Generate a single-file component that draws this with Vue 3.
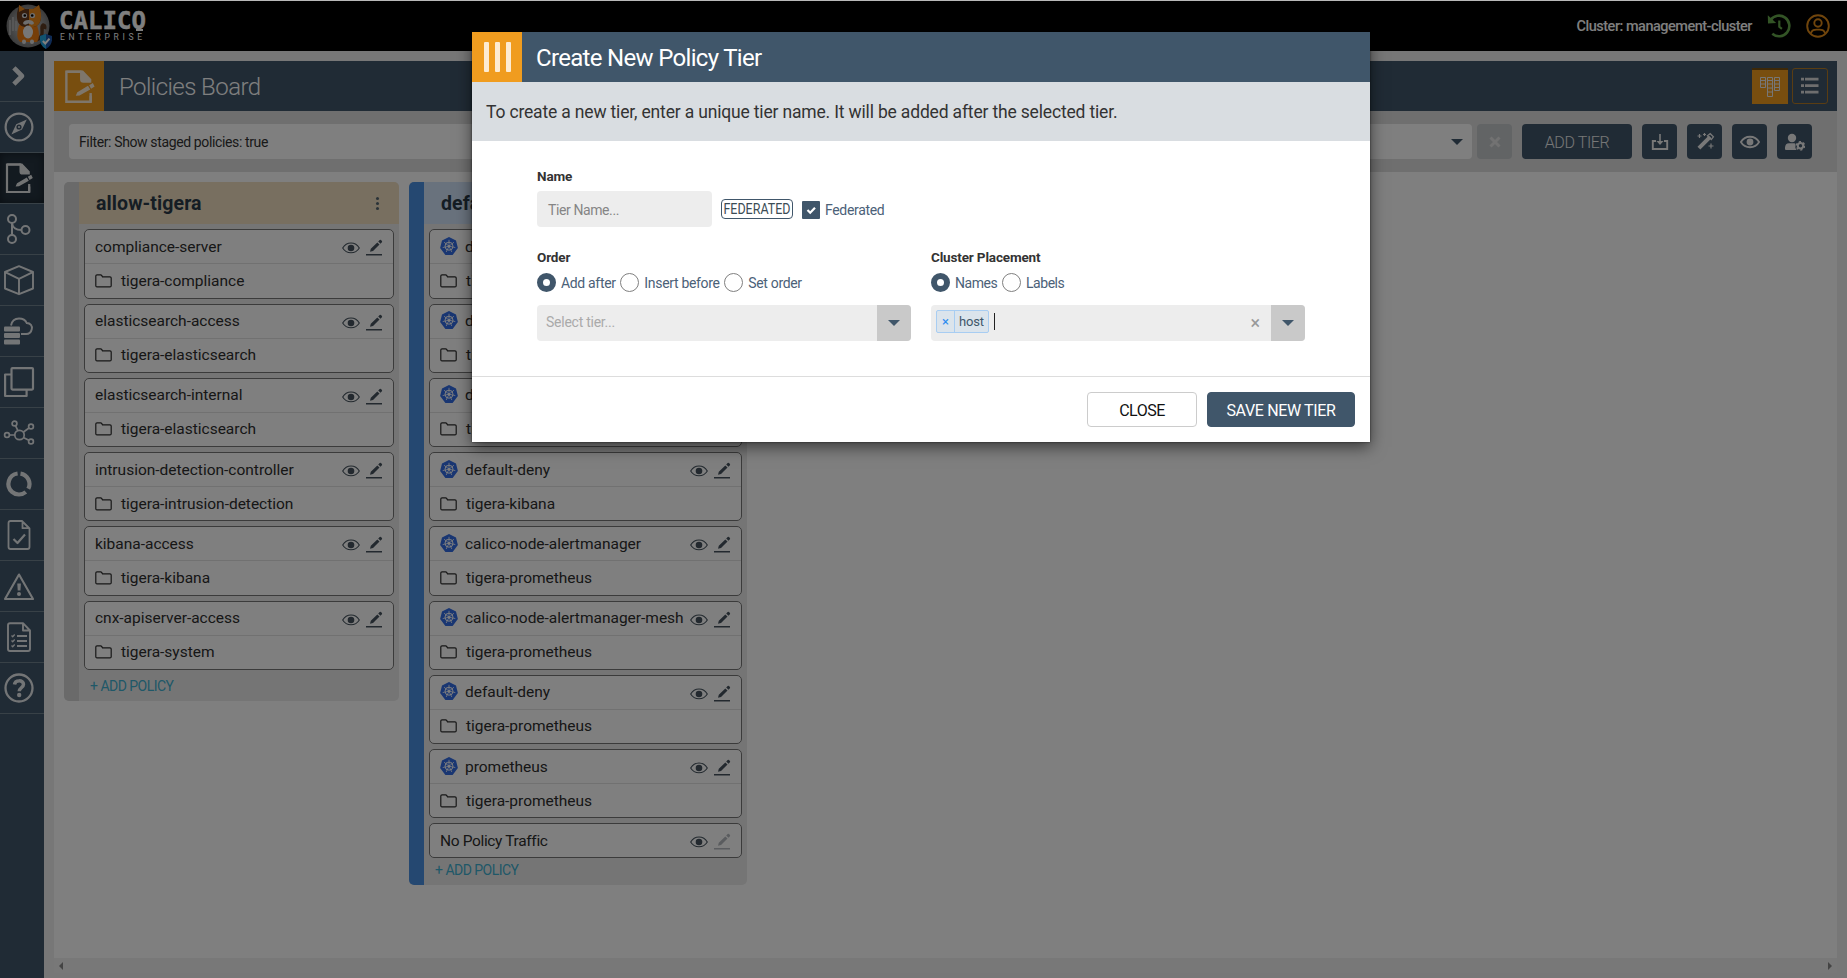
<script setup>
const navIcons = ['chevron', 'compass', 'policy', 'graph', 'cube', 'cloud', 'copies', 'nodes', 'ring', 'doccheck', 'alert', 'doclist', 'help']

const tiers = [
  {
    name: 'allow-tigera',
    kind: 'sand',
    menu: true,
    policies: [
      { name: 'compliance-server', ns: 'tigera-compliance' },
      { name: 'elasticsearch-access', ns: 'tigera-elasticsearch' },
      { name: 'elasticsearch-internal', ns: 'tigera-elasticsearch' },
      { name: 'intrusion-detection-controller', ns: 'tigera-intrusion-detection' },
      { name: 'kibana-access', ns: 'tigera-kibana' },
      { name: 'cnx-apiserver-access', ns: 'tigera-system' },
    ],
  },
  {
    name: 'default',
    kind: 'blue',
    k8s: true,
    policies: [
      { name: 'default-deny', ns: 'tigera-compliance' },
      { name: 'default-deny', ns: 'tigera-dex' },
      { name: 'default-deny', ns: 'tigera-elasticsearch' },
      { name: 'default-deny', ns: 'tigera-kibana' },
      { name: 'calico-node-alertmanager', ns: 'tigera-prometheus' },
      { name: 'calico-node-alertmanager-mesh', ns: 'tigera-prometheus' },
      { name: 'default-deny', ns: 'tigera-prometheus' },
      { name: 'prometheus', ns: 'tigera-prometheus' },
    ],
    footer: 'No Policy Traffic',
  },
]

const tools = ['import', 'wand', 'view', 'usercog']
const orders = ['Add after', 'Insert before', 'Set order']
const placements = ['Names', 'Labels']
</script>

<template>
  <div class="page">
    <svg class="defs" aria-hidden="true">
      <symbol id="chevron" viewBox="0 0 32 32"><path d="M12.500 9.500l6.500 6.500-6.500 6.500" fill="none" stroke="currentColor" stroke-width="4.600" stroke-linecap="square" stroke-linejoin="round" /></symbol>
      <symbol id="compass" viewBox="0 0 32 32">
        <circle cx="16" cy="16" r="13.4" fill="none" stroke="currentColor" stroke-width="2.2" />
        <path fill="currentColor" fill-rule="evenodd" d="M23.8 8.6 19 18.6 8.4 23.6l4.8-10.4zM16 13.4a2.6 2.6 0 1 0 0 5.2 2.6 2.6 0 0 0 0-5.2z" />
        <circle cx="16" cy="16" r="1" fill="currentColor" />
      </symbol>
      <symbol id="policy" viewBox="0 0 32 32">
        <path d="M26.2 24.5V30H4V2.500h13" fill="none" stroke="currentColor" stroke-width="2.2" />
        <path d="M4 2.500h14" stroke="currentColor" stroke-width="2.200" />
        <path d="M16.500 1.400h2.700l7.600 8v3.200h-7.200q-3.100 0-3.100-3.200z" fill="currentColor" />
        <path d="M14 21.200 23.800 15.400 25.800 18.800 16 24.200 12.600 24.400zM24.800 14.800l3.400-2 1.600 3.300-3.200 1.900z" fill="currentColor" />
        <path d="M26.200 22v8" stroke="currentColor" stroke-width="2.200" />
      </symbol>
      <symbol id="graph" viewBox="0 0 32 32">
        <g fill="none" stroke="currentColor" stroke-width="2"><circle cx="9" cy="6" r="4" /><circle cx="9" cy="26" r="4" /><circle cx="22.500" cy="17" r="4" /><path d="M9 10v12M9 10c.5 4.500 4 7 9.500 7" /></g>
      </symbol>
      <symbol id="cube" viewBox="0 0 32 32"><path d="M16 2.200 30 8v16.500L16 30.200 2 24.500V8zM2.200 8.200 16 14.800 29.800 8.200M16 14.800V30" fill="none" stroke="currentColor" stroke-width="1.900" stroke-linejoin="round" /></symbol>
      <symbol id="cloud" viewBox="0 0 32 32">
        <path d="M8 10.500C9 5.500 12 3.500 16 3.500c3.600 0 6.500 1.600 7.700 4.500C27.500 8 29.500 11 28.800 14c-.5 3-2.600 5-5.800 5h-5" fill="none" stroke="currentColor" stroke-width="1.900" />
        <g fill="currentColor"><rect x="1" y="11.500" width="16" height="5" rx="1" /><rect x="1" y="18" width="16" height="5" rx="1" /><rect x="1" y="24.500" width="16" height="5" rx="1" /></g>
      </symbol>
      <symbol id="copies" viewBox="0 0 32 32"><g fill="none" stroke="currentColor" stroke-width="2.200"><rect x="8.500" y="2.100" width="21.500" height="21.500" rx="1" /><path d="M8 8.500H2.100V30h21.500v-6" stroke-linejoin="round" /></g></symbol>
      <symbol id="nodes" viewBox="0 0 32 32">
        <g fill="none" stroke="currentColor" stroke-width="1.700" transform="translate(0 1.500)"><circle cx="16.500" cy="16.500" r="4.700" /><circle cx="11.500" cy="5" r="2.400" /><circle cx="28" cy="8" r="2.400" /><circle cx="4" cy="16.500" r="2.400" /><circle cx="28" cy="23" r="2.400" /><path d="M12.600 7.300l2.400 5M20.500 13.500l5.500-4M6.500 16.500h5.500M20.800 19.200l5 2.600" /></g>
      </symbol>
      <symbol id="ring" viewBox="0 0 32 32">
        <g fill="none" stroke="currentColor" stroke-width="4.200"><path d="M14.600 5.500A10.500 10.500 0 0 0 9 23.800 10.500 10.500 0 0 0 22.800 24" /><path d="M17.500 5.600A10.500 10.500 0 0 1 25.300 20.800" /></g>
      </symbol>
      <symbol id="doccheck" viewBox="0 0 32 32"><g fill="none" stroke="currentColor" stroke-width="1.800" stroke-linejoin="round"><path d="M7.500 2H19l7.500 7.500V28q0 2-2 2h-17q-2 0-2-2V4q0-2 2-2zM19.500 2v7.200h7" /><path d="M10.500 20l4 4 7.500-8.500" stroke-width="2.200" /></g></symbol>
      <symbol id="alert" viewBox="0 0 32 32"><path d="M16 4.500 30 29H2z" fill="none" stroke="currentColor" stroke-width="2.100" stroke-linejoin="round" /><path d="M14.300 13.500h3.600l-.4 7h-2.800z" fill="currentColor" /><circle cx="16" cy="24" r="2" fill="currentColor" /></symbol>
      <symbol id="doclist" viewBox="0 0 32 32"><g fill="none" stroke="currentColor" stroke-width="1.900" stroke-linejoin="round"><path d="M7 2.200h13l7 7.300V28q0 2-2 2H7q-2 0-2-2V4.200q0-2 2-2zM20 2.500v7h7" /><path d="M14 15h10M14 20h10M14 25h10" stroke-width="2" /><path d="M8.500 14.500l1.200 1.200 2-2.200M8.500 19.500l1.200 1.200 2-2.200M8.500 24.500l1.200 1.200 2-2.200" stroke-width="1.300" /></g></symbol>
      <symbol id="help" viewBox="0 0 32 32"><g fill="none" stroke="currentColor"><circle cx="16" cy="16" r="13.500" stroke-width="2.300" /><path d="M11.500 12.500c.5-4.800 9-4.800 9-.2 0 3.500-4.300 3.400-4.300 7" stroke-width="3.500" /></g><circle cx="16.200" cy="23" r="2.200" fill="currentColor" /></symbol>
      <symbol id="eye" viewBox="0 0 18 12"><path d="M.7 6C4.500-.6 13.500-.6 17.300 6 13.500 12.400 4.500 12.400.7 6z" fill="none" stroke="currentColor" stroke-width="1.100" /><circle cx="9" cy="6" r="3.300" fill="currentColor" /></symbol>
      <symbol id="edit" viewBox="0 0 17 17"><path d="M0 15h16v1.500H0zM4 12.800l.8-3L11.300 3.400l2.200 2.200L7 12zM12.200 2.500l1.500-1.400q.7-.5 1.300 0l.9.900q.5.700 0 1.300l-1.400 1.500z" fill="currentColor" /></symbol>
      <symbol id="folder" viewBox="0 0 17 14"><path d="M.8 2q0-1.200 1.200-1.200h3.600q.7 0 1.200.8l.7 1.200h7.500q1.200 0 1.200 1.200v7.700q0 1.200-1.200 1.200H2q-1.200 0-1.200-1.200z" fill="none" stroke="currentColor" stroke-width="1.200" /></symbol>
      <symbol id="helm" viewBox="0 0 18 18">
        <path d="M9 0l7 3.400L17.900 11 13 17.500q-.4.500-1 .5H6q-.6 0-1-.5L.1 11 2 3.400z" fill="#326ce5" />
        <g fill="none" stroke="#fff"><circle cx="9" cy="9.200" r="4" stroke-width="1" /><path d="M9 2.800v5M9 9.200l5-4M9 9.200l6.300 1.400M9 9.200l2.800 5.800M9 9.200L6.200 15M9 9.200l-6.300 1.400M9 9.200L4 5.200" stroke-width=".8" /></g>
        <circle cx="9" cy="9.200" r="1.200" fill="#fff" />
      </symbol>
      <symbol id="import" viewBox="0 0 20 20"><path d="M6 9H2.800v8h14.400V9H14" fill="none" stroke="currentColor" stroke-width="1.900" /><path d="M9.200 2h1.600v7h2.700L10 13 6.500 9h2.700z" fill="currentColor" /></symbol>
      <symbol id="wand" viewBox="0 0 20 20"><path d="M2.500 14.800 13.800 3.500l2.800 2.800L5.300 17.600z" fill="currentColor" /><path d="M12.500 3.800 15.200 1.700 18.400 4.900 16.300 7.600z" fill="none" stroke="currentColor" stroke-width="1.300" /><path d="M4.500 2v4M2.500 4h4M9.500 1v3M8 2.500h3M16 11.500v5M13.500 14h5" stroke="currentColor" stroke-width="1.200" /></symbol>
      <symbol id="view" viewBox="0 0 20 20"><path d="M.9 10C5 3 15 3 19.100 10 15 17 5 17 .9 10z" fill="none" stroke="currentColor" stroke-width="1.800" /><circle cx="10" cy="10" r="3.400" fill="currentColor" /></symbol>
      <symbol id="usercog" viewBox="0 0 20 20"><circle cx="7" cy="6" r="4.200" fill="currentColor" /><path d="M0 17v-1.500Q.3 11.300 4 11.200h5.500q1.300.2 1 1.800-.8 2.500 1.200 5H1q-1 0-1-1z" fill="currentColor" /><circle cx="15.500" cy="13.800" r="2.700" fill="none" stroke="currentColor" stroke-width="2" /><circle cx="15.500" cy="13.800" r="4.100" fill="none" stroke="currentColor" stroke-width="1.500" stroke-dasharray="2.150 2.150" /></symbol>
    </svg>

    <header class="topbar">
      <svg class="mascot" viewBox="0 0 46 46">
        <defs><radialGradient id="disc"><stop offset="0" stop-color="#d4d4d4" /><stop offset="1" stop-color="#777" /></radialGradient></defs>
        <circle cx="22" cy="23" r="21.500" fill="url(#disc)" />
        <path d="M4 17v15M7 14v14M10 18v10" stroke="#b8b8b8" stroke-width="1.500" />
        <path d="M30 37c8-2 6-9 6-12-.2-4 4-4 2.500 1" fill="none" stroke="#5d3b22" stroke-width="3.500" />
        <path d="M13 22q-4 13 1 17h17q4-5 0-17z" fill="#ed7d13" />
        <path d="M13 2l6 4h8l6-4 2 8q1 13-8 14h-8q-9-1-8-14z" fill="#6a3d1d" />
        <path d="M23 6h4l6-4 2 8q1 13-8 14h-4z" fill="#ed8a1d" /><path d="M13 2l6 4-6 3z" fill="#ed8a1d" />
        <circle cx="18.500" cy="12.500" r="2.600" fill="#ddd" /><circle cx="26.500" cy="12.500" r="2.600" fill="#ddd" />
        <circle cx="18.800" cy="12.500" r="1.300" /><circle cx="26.200" cy="12.500" r="1.300" />
        <path d="M17 20q1-3 5.500-3T28 20q0 1.700-2.500 1.700l-3-1.200-3 1.200q-2.500 0-2.500-1.700z" fill="#ddd" />
        <ellipse cx="22" cy="29" rx="5" ry="6.500" fill="#eee" />
        <path d="M18 38.500v.5M26 38.500v.5" stroke="#ddd" stroke-width="4" stroke-linecap="round" />
        <path d="M40 31l6 2q1 9-6 13-7-4-6-13z" fill="#1d55a8" /><path d="M40 31v15q-7-4-6-13z" fill="#23a7e0" /><path d="M36.800 38l2.500 2.500 4.200-4.800" fill="none" stroke="#fff" stroke-width="2" />
      </svg>
      <svg class="wordmark" viewBox="0 0 90 34">
        <text x="0" y="21" textLength="87" lengthAdjust="spacingAndGlyphs" class="wm-main">CALICO</text>
        <rect x="77" y="21" width="7" height="2" fill="#fff" />
        <text x="1" y="31.500" textLength="82" class="wm-sub">ENTERPRISE</text>
      </svg>
      <span class="cluster">Cluster: management-cluster</span>
      <svg class="history" viewBox="0 0 24 24"><path d="M3.500 6.200A10.300 10.300 0 1 1 5.300 19.700" fill="none" stroke="currentColor" stroke-width="2.600" /><path d="M.8 1.200l.2 8.300 8.200-.6z" fill="currentColor" /><path d="M12.300 6.500v6.300l2.600 2" fill="none" stroke="currentColor" stroke-width="2.200" /></svg>
      <svg class="user" viewBox="0 0 24 24"><g fill="none" stroke="currentColor" stroke-width="1.900"><circle cx="12" cy="12" r="10.800" /><circle cx="12" cy="9" r="3.700" /><path d="M4.800 19.500C6 15 9 15.600 12 15.600S18 15 19.200 19.500" /></g></svg>
    </header>

    <div class="shell">
      <nav class="sidebar">
        <div v-for="icon in navIcons" :key="icon" class="nav-item" :class="{ active: icon === 'policy' }">
          <svg><use :href="'#' + icon" /></svg>
        </div>
      </nav>

      <main class="content">
        <div class="titlebar">
          <div class="title-icon"><svg><use href="#policy" /></svg></div>
          <h1>Policies Board</h1>
          <div class="view on">
            <svg viewBox="0 0 20 20"><g fill="none" stroke="#eee" stroke-width="1"><path d="M.5.500h5v10h-5zM7.500.500h5v19h-5zM14.500.500h5v13h-5z" /><path d="M.5 3.500h5M.5 7h5M7.500 3.500h5M7.500 7h5M7.500 11h5M7.500 15h5M14.500 3.500h5M14.500 7h5M14.500 10.500h5" /></g></svg>
          </div>
          <div class="view">
            <svg viewBox="0 0 20 20"><path d="M1 3.200h3M5 3.200h13.500M1 9.700h3M5 9.700h13.500M1 16.200h3M5 16.200h13.500" stroke="#ddd" stroke-width="2.700" /></svg>
          </div>
        </div>

        <div class="toolbar">
          <div class="filter"><span>Filter: Show staged policies: true</span><i class="caret"></i></div>
          <div class="clear-filter"><svg viewBox="0 0 12 12"><path d="M1.500 1.500l9 9m0-9l-9 9" stroke="currentColor" stroke-width="3" /></svg></div>
          <div class="add-tier"><span>ADD TIER</span></div>
          <div v-for="tool in tools" :key="tool" class="tool"><svg><use :href="'#' + tool" /></svg></div>
        </div>

        <div class="board">
          <section v-for="tier in tiers" :key="tier.name" class="tier" :class="tier.kind">
            <div class="stripe"></div>
            <div class="tier-main">
              <div class="tier-head">
                <h2>{{ tier.name }}</h2>
                <span v-if="tier.menu" class="dots"><i></i><i></i><i></i></span>
              </div>
              <div class="cards">
                <article v-for="(p, i) in tier.policies" :key="i" class="card">
                  <div class="row first">
                    <svg v-if="tier.k8s" class="helm"><use href="#helm" /></svg>
                    <span class="label">{{ p.name }}</span>
                    <svg class="eye"><use href="#eye" /></svg>
                    <svg class="edit"><use href="#edit" /></svg>
                  </div>
                  <div class="row second">
                    <svg class="folder"><use href="#folder" /></svg>
                    <span class="label">{{ p.ns }}</span>
                  </div>
                </article>
                <article v-if="tier.footer" class="card single">
                  <div class="row first">
                    <span class="label">{{ tier.footer }}</span>
                    <svg class="eye"><use href="#eye" /></svg>
                    <svg class="edit faded"><use href="#edit" /></svg>
                  </div>
                </article>
              </div>
              <div class="add-policy">+ ADD POLICY</div>
            </div>
          </section>
        </div>
        <div class="hscroll"><i class="left"></i><i class="right"></i></div>
      </main>
    </div>

    <div class="overlay">
      <div class="dialog">
        <div class="dlg-head">
          <div class="dlg-icon"><i></i><i></i><i></i></div>
          <h3>Create New Policy Tier</h3>
        </div>
        <p class="info"><span>To create a new tier, enter a unique tier name. It will be added after the selected tier.</span></p>
        <div class="form">
          <div class="field-label name-label">Name</div>
          <div class="name-row">
            <div class="name-input">Tier Name...</div>
            <div class="badge"><span>FEDERATED</span></div>
            <div class="checkbox"><svg viewBox="0 0 18 18"><path d="M5.500 9l2.700 2.700 4.800-5" fill="none" stroke="#fff" stroke-width="2.200" /></svg></div>
            <span class="opt fed">Federated</span>
          </div>
          <div class="two">
            <div class="half">
              <div class="field-label">Order</div>
              <div class="radios">
                <template v-for="(o, i) in orders" :key="o">
                  <i class="radio" :class="{ checked: i === 0 }"></i><span class="opt">{{ o }}</span>
                </template>
              </div>
              <div class="select"><span class="placeholder">Select tier...</span><div class="drop"><i class="caret"></i></div></div>
            </div>
            <div class="half">
              <div class="field-label">Cluster Placement</div>
              <div class="radios">
                <template v-for="(o, i) in placements" :key="o">
                  <i class="radio" :class="{ checked: i === 0 }"></i><span class="opt">{{ o }}</span>
                </template>
              </div>
              <div class="select">
                <div class="chip"><b>×</b><span>host</span></div>
                <i class="cursor"></i>
                <span class="clear">×</span>
                <div class="drop"><i class="caret"></i></div>
              </div>
            </div>
          </div>
        </div>
        <div class="dlg-foot">
          <div class="btn"><span>CLOSE</span></div>
          <div class="btn primary"><span>SAVE NEW TIER</span></div>
        </div>
      </div>
    </div>
  </div>
</template>

<style>
html, body { margin: 0; overflow: hidden; }
</style>

<style scoped>
* { box-sizing: border-box; }
.page { width: 1847px; height: 978px; padding-top: 1px; background: #b9b9b9; font-family: Roboto, "Open Sans", sans-serif; color: #333; display: flex; flex-direction: column; overflow: hidden; position: relative; }
.defs { position: absolute; width: 0; height: 0; }
h1, h2, h3, p { margin: 0; font-weight: 400; }
svg { display: block; flex: none; }
span { white-space: nowrap; }

.topbar { height: 50px; background: #000; display: flex; align-items: center; padding: 0 17px 0 6px; flex: none; }
.mascot { width: 46px; height: 46px; }
.wordmark { width: 90px; height: 34px; margin-left: 7px; margin-top: -3px; overflow: visible; }
.wm-main { font: 700 25px "DejaVu Sans Mono", monospace; fill: #fff; stroke: #fff; stroke-width: .4px; }
.wm-sub { font: 400 8.500px Roboto, sans-serif; fill: #fff; }
.cluster { margin-left: auto; color: #fff; font-weight: 500; font-size: 14.500px; letter-spacing: -.5px; }
.history { width: 24px; height: 24px; color: #66a84c; margin-left: 15px; }
.user { width: 24px; height: 24px; color: #e08a18; margin-left: 15px; }

.shell { flex: 1; display: flex; min-height: 0; }
.sidebar { width: 44px; background: #40566a; color: #fff; }
.nav-item { height: 51px; border-bottom: 1px solid #71828f; display: flex; align-items: center; padding-left: 3px; }
.nav-item svg { width: 32px; height: 32px; opacity: .88; }
.nav-item.active { background: #263440; box-shadow: inset 0 0 9px #131c24; }

.content { flex: 1; background: #efefef; padding: 10px 10px 5px; display: flex; flex-direction: column; min-width: 0; }
.titlebar { height: 50px; background: #40566a; display: flex; align-items: center; padding-right: 9px; flex: none; }
.title-icon { width: 50px; height: 50px; background: #f09c1f; display: flex; align-items: center; justify-content: center; color: #fff; }
.title-icon svg { width: 35px; height: 35px; opacity: .82; }
h1 { font-size: 24px; font-weight: 300; letter-spacing: -.55px; color: #fff; margin: 1px auto 0 15px; }
.view { width: 36px; height: 36px; border: 1px solid #b57a24; border-radius: 3px; margin-left: 4px; display: flex; align-items: center; justify-content: center; }
.view svg { width: 20px; height: 20px; }
.view.on { background: #f09c1f; border-radius: 0; border: 0; border-top: 2px solid #7b5110; }

.toolbar { height: 61px; background: #dedede; display: flex; align-items: center; padding: 0 25px 0 15px; flex: none; }
.filter { flex: 1; height: 35px; background: #fff; border-radius: 4px; display: flex; align-items: center; justify-content: space-between; padding: 0 9px 0 10px; font-size: 14px; letter-spacing: -.37px; }
.caret { display: block; border: 6px solid transparent; border-top-color: #40566a; border-bottom: 0; }
.clear-filter { width: 35px; height: 35px; margin: 0 0 0 5px; border-radius: 4px; background: #c4c8cb; color: #e4e4e4; display: flex; align-items: center; justify-content: center; }
.clear-filter svg { width: 12px; height: 12px; }
.add-tier { width: 110px; height: 35px; margin-left: 10px; border-radius: 4px; background: #40566a; color: #eee; display: flex; align-items: center; justify-content: center; font-size: 16px; font-weight: 300; letter-spacing: -.4px; padding-top: 2px; }
.tool { width: 35px; height: 35px; margin-left: 10px; border-radius: 4px; background: #40566a; color: #f0f0f0; display: flex; align-items: center; justify-content: center; }
.tool svg { width: 20px; height: 20px; }

.board { flex: 1; background: #fff; padding: 10px; display: flex; align-items: flex-start; gap: 10px; min-height: 0; }
.tier { display: flex; border-radius: 5px; overflow: hidden; width: 335px; background: #ebebeb; }
.tier.blue { width: 338px; }
.stripe { width: 15px; background: #d4d4d4; }
.blue .stripe { background: #4a90e2; }
.tier-main { flex: 1; min-width: 0; }
.tier-head { height: 42px; background: #f1dfc1; display: flex; align-items: center; justify-content: space-between; padding: 0 20px 0 17px; }
.blue .tier-head { background: #d2e5fb; }
h2 { font-size: 19.500px; font-weight: 700; color: #2b3a48; letter-spacing: .1px; }
.dots { display: flex; flex-direction: column; gap: 2px; }
.dots i { width: 3px; height: 3px; border-radius: 2px; background: #55656f; }
.cards { padding: 5.250px 5px 0; }
.card { height: 69.250px; margin-bottom: 5px; border: 1px solid #777; border-radius: 5px; background: #fff; }
.card:last-child { margin-bottom: 0; }
.row { display: flex; align-items: center; padding-left: 10px; color: #2e2e2e; }
.row .label { font-size: 15.500px; letter-spacing: -.01px; }
.first { height: 34px; border-bottom: 1px solid #e2e2e2; padding-right: 10px; }
.second { height: 33px; }
.single { height: 34.600px; }
.single .first { border: 0; height: 33px; }
.single .label { letter-spacing: -.35px; }
.helm { width: 18px; height: 18px; margin-right: 7px; margin-top: -2px; }
.eye { width: 18px; height: 12px; margin-left: auto; margin-top: 3px; color: #46535e; }
.edit { width: 17px; height: 17px; margin-left: 6px; margin-top: 2px; color: #46535e; }
.edit.faded { opacity: .4; }
.folder { width: 17px; height: 14px; margin-right: 9px; }
.add-policy { height: 31.500px; line-height: 32px; padding-left: 11px; color: #3fb0d0; font-size: 14px; letter-spacing: -.52px; }
.blue .add-policy { height: 27.500px; line-height: 25px; }

.hscroll { height: 15px; background: #f1f1f1; display: flex; justify-content: space-between; align-items: center; padding: 0 5px; flex: none; }
.hscroll i { border: 4px solid transparent; }
.hscroll .left { border-right-color: #888; border-left: 0; }
.hscroll .right { border-left-color: #888; border-right: 0; }

.overlay { position: absolute; inset: 1px 0 0; background: rgba(0, 0, 0, .5); }
.dialog { width: 898px; height: 410px; margin: 31px 0 0 472px; background: #fff; box-shadow: 0 5px 15px rgba(0, 0, 0, .55), 0 0 2px rgba(0, 0, 0, .6); display: flex; flex-direction: column; }
.dlg-head { height: 50px; background: #40566a; display: flex; align-items: center; }
.dlg-icon { width: 50px; height: 50px; background: #f09c1f; display: flex; align-items: center; justify-content: center; gap: 6px; }
.dlg-icon i { width: 5px; height: 30px; border-radius: 1px; background: #fdebd2; }
h3 { font-size: 24px; letter-spacing: -.68px; color: #fff; margin: 2px 0 0 14px; }
.info { height: 59px; background: #d9dde1; display: flex; align-items: center; padding-left: 14px; font-size: 17.500px; letter-spacing: -.17px; }
.form { height: 236px; padding: 26px 65px 0; border-bottom: 1px solid #ddd; }
.field-label { height: 18px; line-height: 18px; font-size: 13.500px; font-weight: 700; letter-spacing: -.15px; }
.two .field-label { line-height: 20px; }
.name-row { display: flex; align-items: center; margin-top: 6px; height: 36px; }
.name-input { width: 175px; height: 36px; background: #ededed; border-radius: 4px; padding-left: 11px; line-height: 39px; font-size: 14px; color: #858585; letter-spacing: -.4px; }
.badge { width: 72px; height: 20px; margin: 0 9px; border: 1.500px solid #40566a; border-radius: 4px; display: flex; align-items: center; justify-content: center; font-size: 14.500px; color: #3b4c55; }
.badge span { transform: scaleX(.86); }
.checkbox { width: 18px; height: 18px; background: #40566a; border-radius: 1px; margin-top: 2px; }
.opt { font-size: 14px; color: #4b6178; letter-spacing: -.33px; }
.fed { margin-left: 5px; margin-top: 2px; }
.two { display: flex; gap: 20px; margin-top: 20px; }
.half { width: 374px; }
.radios { display: flex; align-items: center; height: 19px; margin: 8px 0 13px; }
.radio { width: 19px; height: 19px; border-radius: 50%; border: 1px solid #808080; background: #fff; flex: none; }
.radio.checked { border: 6px solid #40566a; }
.radios .opt { margin: 0 4.700px 0 5px; }
.half + .half .opt { letter-spacing: -.45px; }
.select { height: 36px; background: #ededed; border-radius: 4px; display: flex; align-items: center; overflow: hidden; }
.placeholder { margin-left: 9px; font-size: 14px; color: #aaa; margin-top: -2px; letter-spacing: -.25px; }
.drop { width: 34px; height: 36px; background: #c9c9c9; margin-left: auto; display: flex; align-items: center; justify-content: center; }
.clear { margin-left: auto; margin-right: 11px; color: #999; font-size: 18px; line-height: 18px; }
.clear + .drop { margin-left: 0; }
.chip { width: 53px; height: 23px; margin: -3px 0 0 5px; border: 1px solid #a8cdf2; border-radius: 2px; background: #dbe4ec; display: flex; font-size: 13px; line-height: 21px; color: #40566a; }
.chip b { width: 18px; border-right: 1px solid #a8cdf2; text-align: center; color: #2a8cf0; font-weight: 400; }
.chip span { margin-left: 4px; letter-spacing: -.2px; }
.cursor { width: 1px; height: 17px; background: #222; margin: -3px 0 0 5px; }
.dlg-foot { flex: 1; display: flex; justify-content: flex-end; align-items: center; gap: 10px; padding: 0 15px; }
.btn { width: 110px; height: 35px; border: 1px solid #ccc; border-radius: 4px; color: #111; font-size: 16px; letter-spacing: -.5px; display: flex; align-items: center; justify-content: center; padding-top: 2px; }
.btn.primary { width: 148px; background: #40566a; border-color: #40566a; color: #fff; letter-spacing: -.36px; }
</style>
